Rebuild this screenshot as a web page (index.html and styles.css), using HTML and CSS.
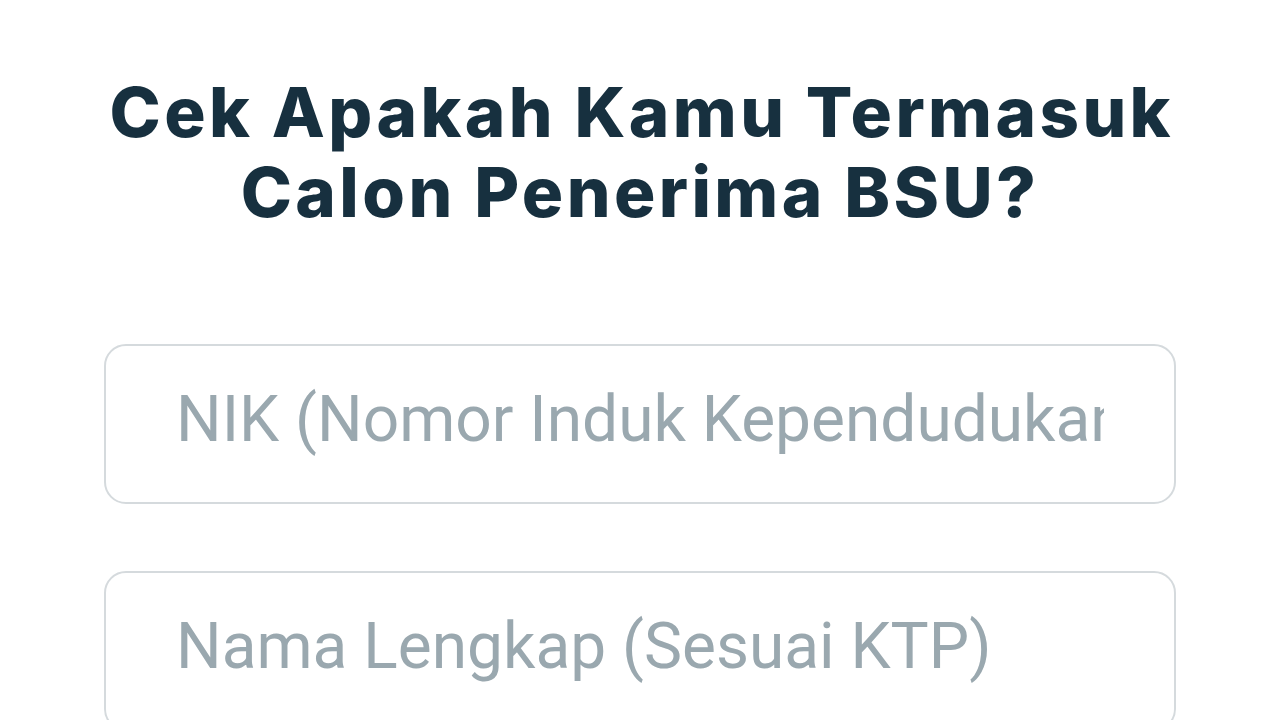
FILE: index.html
```html
<!DOCTYPE html>
<html lang="id">
<head>
    <meta charset="UTF-8">
    <meta name="viewport" content="width=device-width, initial-scale=1.0">
    <title>Cek Calon Penerima BSU</title>
    <link rel="stylesheet" href="styles.css">
</head>
<body>
    <div class="container">
        <h1 class="title">Cek Apakah Kamu Termasuk<br>Calon Penerima BSU?</h1>

        <div class="form">
            <input type="text" id="nik" placeholder="NIK (Nomor Induk Kependudukan)">
            <input type="text" id="nama" placeholder="Nama Lengkap (Sesuai KTP)">
        </div>
    </div>
</body>
</html>
```

FILE: styles.css
```css
body {
    margin: 0;
    background: #ffffff;
    font-family: Roboto, "Liberation Sans", sans-serif;
    overflow: hidden;
}
.container {
    padding: 0 104px 0 104px;
    height: 720px;
    box-sizing: border-box;
}
.title {
    margin: 0;
    padding-top: 72px;
    font-family: Inter, "DejaVu Sans", sans-serif;
    font-weight: 800;
    font-size: 69px;
    line-height: 80px;
    letter-spacing: 3.4px;
    text-indent: 3.4px;
    text-align: center;
    color: #17303f;
}
.form {
    margin-top: 112px;
    display: flex;
    flex-direction: column;
    gap: 67px;
}
.form input {
    display: block;
    width: 100%;
    height: 160px;
    box-sizing: border-box;
    padding: 0 70px 10px 70px;
    border: 2px solid #d5dadd;
    border-radius: 22px;
    background: #ffffff;
    font-family: Roboto, "Liberation Sans", sans-serif;
    font-size: 64px;
    color: #17303f;
    outline: none;
}
.form input::placeholder {
    color: #9aa8af;
    opacity: 1;
}
```
